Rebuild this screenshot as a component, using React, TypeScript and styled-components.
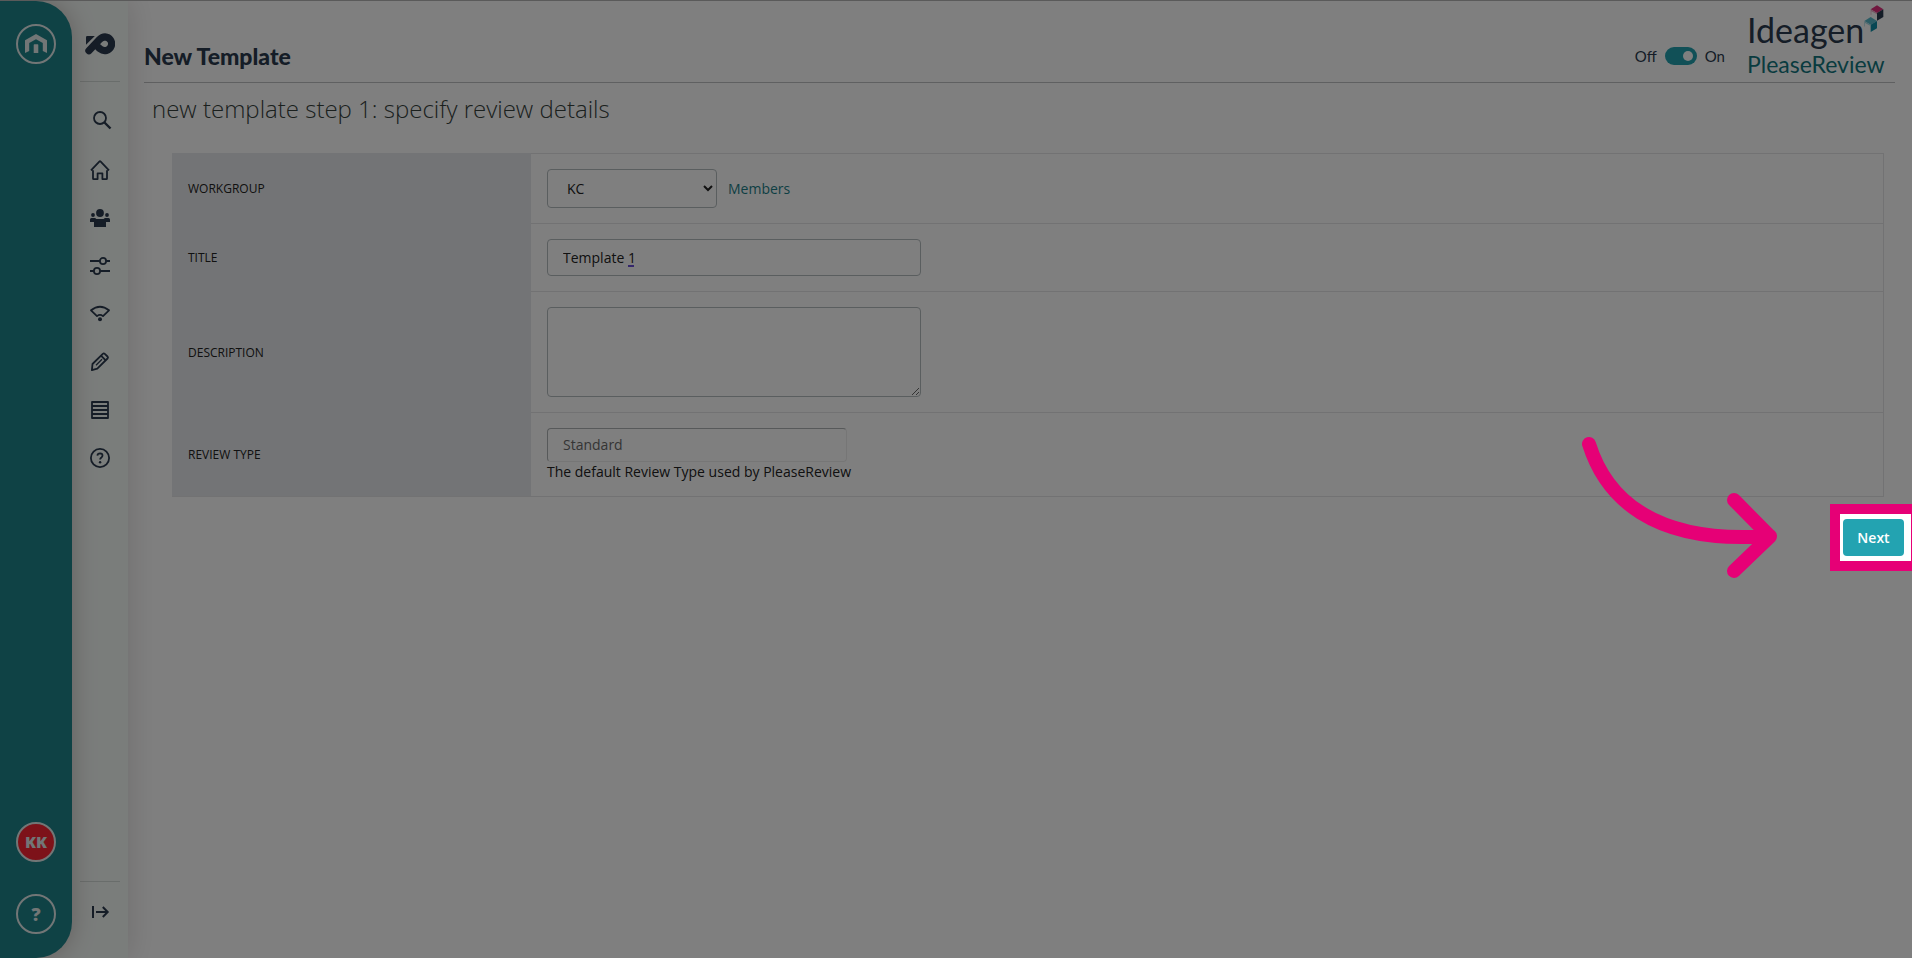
import React from "react";
import styled, { createGlobalStyle } from "styled-components";

const teal = "#22a1af";
const railTeal = "#1e848b";
const ink = "#2b3a4e";
const pink = "#e60076";

const GlobalStyle = createGlobalStyle`
  *, *::before, *::after { box-sizing: border-box; }
  html, body { margin: 0; }
  body {
    background: #fff;
    color: #222;
    font: 14px/20px "Open Sans", "Noto Sans", sans-serif;
    overflow-x: hidden;
  }
  button, input, select, textarea { font: inherit; color: inherit; }
`;

const Page = styled.div`
  display: flex;
  min-height: 100vh;
  position: relative;
  overflow: hidden;
  border-top: 1px solid #5a5a5a;
`;

const Rail = styled.aside`
  flex: none;
  width: 72px;
  display: flex;
  flex-direction: column;
  align-items: center;
  gap: 32px;
  padding: 23px 0 24px;
  background: ${railTeal};
  border-radius: 0 36px 36px 0;
  box-shadow: 0 0 24px rgba(60, 20, 20, 0.26);
  z-index: 2;
`;

const RailButton = styled.button<{ $fill?: string; $size?: number }>`
  width: 40px;
  height: 40px;
  display: flex;
  align-items: center;
  justify-content: center;
  padding: 0;
  border: 2px solid #e4ecec;
  border-radius: 50%;
  background: ${(p) => p.$fill ?? "transparent"};
  color: #e4ecec;
  font-family: "Open Sans", "Noto Sans", sans-serif;
  font-weight: 800;
  font-size: ${(p) => p.$size ?? 16}px;
`;

const Spacer = styled.div`
  flex: 1;
`;

const Sidebar = styled.nav`
  flex: none;
  width: 128px;
  margin-left: -72px;
  padding-left: 72px;
  display: flex;
  flex-direction: column;
  align-items: center;
  background: #f5faf7;
  box-shadow: 0 0 28px rgba(40, 20, 20, 0.16);
  color: ${ink};
  z-index: 1;
`;

const Brand = styled.a`
  width: 40px;
  height: 81px;
  display: flex;
  align-items: center;
  justify-content: center;
  padding-top: 5px;
  border-bottom: 1px solid #d3dad7;
  margin-bottom: 14px;
  color: inherit;
`;

const NavButton = styled.button`
  width: 48px;
  height: 48px;
  display: flex;
  align-items: center;
  justify-content: center;
  padding: 0;
  border: 0;
  background: none;
`;

const SearchButton = styled(NavButton)`
  padding-left: 4px;
  margin-bottom: 2px;
`;

const SidebarFoot = styled.div`
  width: 40px;
  height: 77px;
  display: flex;
  justify-content: center;
  padding-top: 6px;
  border-top: 1px solid #d3dad7;
`;

const Main = styled.main`
  flex: 1;
  min-width: 0;
`;

const Header = styled.header`
  height: 82px;
  margin: 0 17px 0 16px;
  display: flex;
  align-items: flex-start;
  border-bottom: 1px solid #bfc0c2;
`;

const Title = styled.h1`
  flex: 1;
  margin: 0;
  padding-top: 39px;
  font: 900 23px/32px Lato, sans-serif;
  color: ${ink};
`;

const SwitchRow = styled.label`
  display: flex;
  align-items: center;
  gap: 8px;
  padding-top: 43px;
  font: 15px/24px Lato, sans-serif;
  color: ${ink};
`;

const Switch = styled.input`
  appearance: none;
  width: 32px;
  height: 18px;
  margin: 0;
  padding: 4px;
  border-radius: 9px;
  background: ${teal};
  display: flex;
  justify-content: flex-end;
  &::before {
    content: "";
    width: 10px;
    height: 10px;
    border-radius: 50%;
    background: #fff;
  }
`;

const Logo = styled.div`
  position: relative;
  width: 137px;
  margin: 8px 11px 0 22px;
  white-space: nowrap;
  font-family: Lato, sans-serif;
`;

const LogoName = styled.div`
  font-size: 34px;
  line-height: 41px;
  color: ${ink};
`;

const LogoProduct = styled.div`
  font-size: 23px;
  line-height: 28px;
  color: #12777f;
`;

const Cubes = styled.svg`
  position: absolute;
  top: -4px;
  right: 0;
`;

const StepTitle = styled.h2`
  margin: 9px 24px 28px;
  font-size: 24px;
  line-height: 33px;
  font-weight: 300;
  color: #36413c;
`;

const FormTable = styled.table`
  width: calc(100% - 72px);
  margin: 0 28px 0 44px;
  border-collapse: separate;
  border-spacing: 0;
  border-bottom: 1px solid #e4e5e6;
`;

const LabelCell = styled.th`
  width: 359px;
  padding: 2px 16px 0;
  background: #e7e9ec;
  text-align: left;
  font-weight: 400;
  font-size: 12px;
  line-height: 16px;
  text-transform: uppercase;
`;

const FieldCell = styled.td`
  padding: 15px 16px;
  border-top: 1px solid #e4e5e6;
  border-right: 1px solid #e4e5e6;
`;

const FieldRow = styled.div`
  position: relative;
  display: flex;
  align-items: center;
  gap: 11px;
`;

const Select = styled.select`
  width: 170px;
  height: 39px;
  padding: 0 0 0 15px;
  border: 1px solid #b5bcbf;
  border-radius: 4px;
  background: #fff;
`;

const TextInput = styled.input`
  width: 374px;
  height: 37px;
  padding: 0 15px;
  border: 1px solid #b5bcbf;
  border-radius: 4px;
  background: #fff;
`;

const TypeInput = styled(TextInput)`
  width: 300px;
  height: 34px;
  padding-bottom: 2px;
  border-color: #aeb2b4 #ececec #ececec #aeb2b4;
  color: #6a6a6a;
`;

const SuggestionMark = styled.span`
  position: absolute;
  left: 81px;
  bottom: 9px;
  width: 6px;
  height: 2px;
  background: #6a4fd8;
`;

const TextArea = styled.textarea`
  display: block;
  width: 374px;
  height: 90px;
  padding: 8px 15px;
  border: 1px solid #b5bcbf;
  border-radius: 4px;
  background: #fff;
`;

const Link = styled.a`
  color: #1c7f88;
  text-decoration: none;
`;

const Hint = styled.div`
  line-height: 19px;
`;

const Actions = styled.div`
  display: flex;
  justify-content: flex-end;
  padding: 22px 8px;
`;

const Spotlight = styled.div`
  position: relative;
  z-index: 11;
  &::before {
    content: "";
    position: absolute;
    inset: -15px -17px -15px -13px;
    border: 10px solid ${pink};
    background: #fff;
  }
`;

const NextButton = styled.button`
  position: relative;
  display: block;
  width: 61px;
  height: 37px;
  padding: 0;
  border: 0;
  border-radius: 4px;
  background: #23a3b1;
  color: #fff;
  font-weight: 600;
`;

const Arrow = styled.svg`
  position: absolute;
  right: 119px;
  top: -84px;
  pointer-events: none;
`;

const Shade = styled.div`
  position: absolute;
  inset: 0;
  background: rgba(0, 0, 0, 0.5);
  z-index: 10;
  pointer-events: none;
`;

const Icon = ({ children, size = 20 }: { children: React.ReactNode; size?: number }) => (
  <svg
    width={size}
    height={size}
    viewBox="0 0 20 20"
    fill="none"
    stroke="currentColor"
    strokeWidth="1.8"
    strokeLinejoin="round"
    aria-hidden="true"
  >
    {children}
  </svg>
);

const navItems = [
  {
    name: "Home",
    icon: <path d="M3 10.2v8.2q0 .7.7.7H7.600v-5.800h4.800v5.800h3.900q.7 0 .7-.7v-8.200M1 10.300 9.300 1.600q.7-.7 1.400 0L19 10.300" />,
  },
  {
    name: "People",
    icon: (
      <g fill="currentColor" stroke="none">
        <circle cx="10" cy="5" r="3.900" />
        <circle cx="3" cy="7" r="1.900" />
        <circle cx="17" cy="7" r="1.900" />
        <path d="M0 11.500q0-1.500 1.500-1.500h3.200q1 0 1.600 1h7.400q.6-1 1.600-1h3.200q1.500 0 1.500 1.500V14h-4v5H4v-5H0z" />
      </g>
    ),
  },
  {
    name: "Settings",
    icon: (
      <>
        <path d="M0 5h9.800M16.200 5H20M0 15h3.800M10.200 15H20" />
        <circle cx="13" cy="5" r="3.100" />
        <circle cx="7" cy="15" r="3.100" />
      </>
    ),
  },
  {
    name: "Activity",
    icon: (
      <>
        <path d="M1 6.300Q10-.9 19 6.300L13 12.100Q10 9.700 7 12.100Z" />
        <circle cx="10" cy="15.300" r="2" fill="currentColor" stroke="none" />
      </>
    ),
  },
  {
    name: "Edit",
    icon: (
      <>
        <path d="M1.900 18.200 2.500 12 12.800 1.800q1-.9 2 0l2.700 2.700q.9 1 0 2L7.300 16.700Z" />
        <path d="m11 3.600 4.700 4.700" />
        <path d="M6 13.200 12 7.300" strokeWidth="1.200" />
      </>
    ),
  },
  {
    name: "Reports",
    icon: <path d="M2 2h16v16H2zM2 6h16M2 10h16M2 14h16" />,
  },
  {
    name: "Help",
    icon: (
      <>
        <circle cx="10" cy="10" r="9.100" />
        <path d="M7.400 7.600q.2-2.200 2.700-2.200 2.400.1 2.400 2.200 0 1.200-1.200 2-1.200.7-1.200 2" />
        <circle cx="10.100" cy="14.200" r="1.200" fill="currentColor" stroke="none" />
      </>
    ),
  },
];

export default function App() {
  return (
    <>
      <GlobalStyle />
      <Page>
        <Rail>
          <RailButton aria-label="Hub">
            <svg width="24" height="20" viewBox="0 0 24 20" fill="currentColor" aria-hidden="true">
              <path d="M1 6.300 12 0l11 6.300V19l-4.200-2V9L12 5.200 5.200 9v8L1 19Z" />
              <path d="M9.700 11q0-.7.7-.7h3.200q.7 0 .7.700v8H9.700z" />
            </svg>
          </RailButton>
          <Spacer />
          <RailButton $fill="#fb2432">KK</RailButton>
          <RailButton $size={18} aria-label="Support">?</RailButton>
        </Rail>
        <Sidebar>
          <Brand href="#" aria-label="PleaseReview">
            <svg width="30" height="22" viewBox="0 0 30 22" aria-hidden="true">
              <path d="M1 4.300q0-1.300 1.300-1.300h7.500L1 11.700Z" fill="currentColor" />
              <path
                d="M3.900 17.700 14.500 6.600Q17 3.900 20 3.900a6.900 6.900 0 1 1-4.700 12.200l-1.800-1.600"
                fill="none"
                stroke="currentColor"
                strokeWidth="7.200"
                strokeLinecap="round"
              />
            </svg>
          </Brand>
          <SearchButton aria-label="Search">
            <Icon>
              <circle cx="8" cy="8" r="6" />
              <path d="m12.500 12.500 6 6" strokeWidth="2.400" />
            </Icon>
          </SearchButton>
          {navItems.map((item) => (
            <NavButton key={item.name} aria-label={item.name}>
              <Icon>{item.icon}</Icon>
            </NavButton>
          ))}
          <Spacer />
          <SidebarFoot>
            <NavButton aria-label="Expand menu">
              <Icon>
                <path d="M3 4v12M6 10h11.500M12.800 5l4.900 5-4.900 5" strokeWidth="2" strokeLinejoin="miter" />
              </Icon>
            </NavButton>
          </SidebarFoot>
        </Sidebar>
        <Main>
          <Header>
            <Title>New Template</Title>
            <SwitchRow>
              Off
              <Switch type="checkbox" defaultChecked />
              On
            </SwitchRow>
            <Logo>
              <LogoName>Ideagen</LogoName>
              <LogoProduct>PleaseReview</LogoProduct>
              <Cubes width="20" height="28" viewBox="0 0 60 84" aria-hidden="true">
                <path d="M39 1 58 13 39 24 20 13Z" fill="#e3307f" />
                <path d="M58 13v23L39 47V24Z" fill={ink} />
                <path d="m20 13 19 11v4L22 19v11l-2-1Z" fill="#eda5c4" />
                <path d="m20 36 19 12-19 11L1 48Z" fill="#58b9cb" />
                <path d="M39 48v22L20 81V59Z" fill="#0f8fa8" />
                <path d="m1 48 19 11v4L3 54v11l-2-1Z" fill="#a5d9e3" />
              </Cubes>
            </Logo>
          </Header>
          <StepTitle>new template step 1: specify review details</StepTitle>
          <FormTable>
            <tbody>
              <tr>
                <LabelCell scope="row"><label htmlFor="workgroup">Workgroup</label></LabelCell>
                <FieldCell>
                  <FieldRow>
                    <Select id="workgroup" defaultValue="KC"><option>KC</option></Select>
                    <Link href="#">Members</Link>
                  </FieldRow>
                </FieldCell>
              </tr>
              <tr>
                <LabelCell scope="row"><label htmlFor="title">Title</label></LabelCell>
                <FieldCell>
                  <FieldRow>
                    <TextInput id="title" defaultValue="Template 1" />
                    <SuggestionMark />
                  </FieldRow>
                </FieldCell>
              </tr>
              <tr>
                <LabelCell scope="row"><label htmlFor="description">Description</label></LabelCell>
                <FieldCell>
                  <TextArea id="description" />
                </FieldCell>
              </tr>
              <tr>
                <LabelCell scope="row"><label htmlFor="type">Review Type</label></LabelCell>
                <FieldCell>
                  <FieldRow>
                    <TypeInput id="type" defaultValue="Standard" readOnly />
                  </FieldRow>
                  <Hint>The default Review Type used by PleaseReview</Hint>
                </FieldCell>
              </tr>
            </tbody>
          </FormTable>
          <Actions>
            <Spotlight>
              <NextButton>Next</NextButton>
              <Arrow
                width="204"
                height="144"
                viewBox="1580 435 204 144"
                fill="none"
                stroke={pink}
                strokeWidth="14"
                strokeLinecap="round"
                strokeLinejoin="round"
                aria-hidden="true"
              >
                <path d="M1588 444C1604 495 1649 545 1769 536M1733 500l36 36.500-36 34.500" />
              </Arrow>
            </Spotlight>
          </Actions>
        </Main>
        <Shade />
      </Page>
    </>
  );
}
